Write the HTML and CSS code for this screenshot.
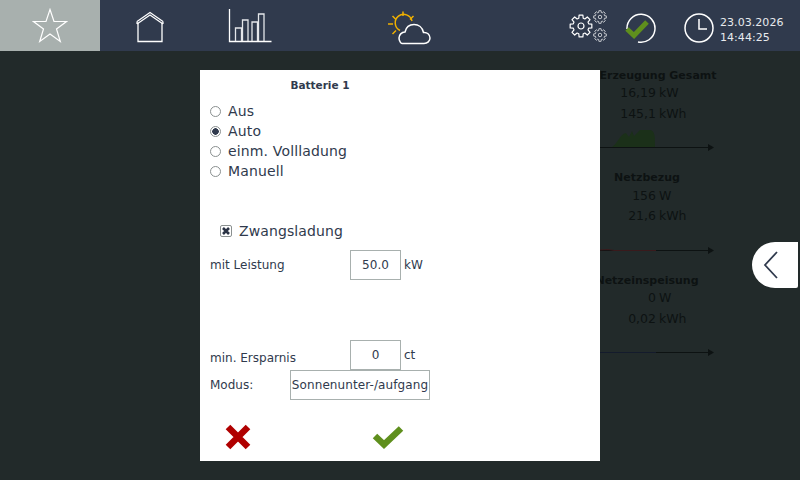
FILE: index.html
```html
<!DOCTYPE html>
<html lang="en">
<head>
    <meta charset="UTF-8">
    <meta name="viewport" content="width=device-width, initial-scale=1.0">
    <title>Batterie 1</title>
    <link rel="stylesheet" href="styles.css">
</head>
<body>
    <svg class="defs" width="0" height="0">
        <symbol id="gear" viewBox="-12 -12 24 24">
            <path d="M7.69-2.2 10.83-1.91V1.91L7.69 2.2 7 3.88 9.01 6.31 6.31 9.01 3.88 7 2.2 7.69 1.91 10.83H-1.91L-2.2 7.69-3.88 7-6.31 9.01-9.01 6.31-7 3.88-7.69 2.2-10.83 1.91V-1.91L-7.69-2.2-7-3.88-9.01-6.31-6.31-9.01-3.88-7-2.2-7.69-1.91-10.83H1.91L2.2-7.69 3.88-7 6.31-9.01 9.01-6.31 7-3.88Z" fill="none" stroke="#fff" stroke-width="1.200" stroke-linejoin="round"/>
            <circle r="3" fill="none" stroke="#fff" stroke-width="1.200"/>
        </symbol>
    </svg>

    <header class="topbar">
        <div class="nav-item active">
            <svg width="36" height="36" viewBox="0 0 36 36"><path d="M18 1.500 22 13.500H34.500L24.500 21 28.300 33.500 18 26 7.700 33.500 11.500 21 1.500 13.500H14Z" fill="none" stroke="#fff" stroke-width="1.200"/></svg>
        </div>
        <div class="nav-item">
            <svg width="32" height="36" viewBox="0 0 32 36"><path d="M4 14.500V33.500H28V14.500" fill="none" stroke="#fff" stroke-width="1.300"/><path d="M3 16 16 7 29 16M3 13.500 16 4.500 29 13.500M3 13.500V16M29 13.500V16" fill="none" stroke="#fff" stroke-width="1.200"/></svg>
        </div>
        <div class="nav-item">
            <svg width="44" height="36" viewBox="0 0 44 36"><path d="M1.500 1V33.500H43.500" fill="none" stroke="#fff" stroke-width="1.300"/><path d="M7.500 33V20H13.500V33M14.500 33V12H20V33M24 33V14H29.500V33M30.500 33V6H36V33" fill="none" stroke="#e4e6ea" stroke-width="1.300"/></svg>
        </div>
        <div class="weather">
            <svg width="44" height="36" viewBox="0 0 44 36">
                <g fill="none" stroke="#f0b000" stroke-width="1.500">
                    <path d="M12 21.500A8.500 8.500 0 1 1 24 12"/>
                    <path d="M15 2.500V7M4.500 7 8 10.500M25.500 7 22 10.500M0 15H5M4.500 25 8 21.500"/>
                </g>
                <path d="M14 34.500H36C39.500 34.500 42 32 42 29 42 25.500 39 23 35.500 23.500 34.500 18.500 30.500 15.500 26 15.500 21.500 15.500 18 18.500 17 23 13.500 23 11 26 11 29 11 32 13 34.500 14 34.500Z" fill="#303a4d" stroke="#fff" stroke-width="1.500"/>
            </svg>
        </div>
        <div class="gears">
            <svg class="gear-big" width="24" height="24"><use href="#gear"/></svg>
            <svg class="gear-small" width="14" height="14"><use href="#gear"/></svg>
            <svg class="gear-small" width="14" height="14"><use href="#gear"/></svg>
        </div>
        <svg class="status" width="32" height="32" viewBox="0 0 32 32">
            <path d="M3 17A14 14 0 1 1 14 30" fill="none" stroke="#fff" stroke-width="1.500"/>
            <path d="M3 17 10 23.500 23 10" fill="none" stroke="#5f8f1d" stroke-width="5"/>
        </svg>
        <svg class="clock" width="32" height="32" viewBox="0 0 32 32">
            <circle cx="16" cy="16" r="14" fill="none" stroke="#fff" stroke-width="1.500"/>
            <path d="M16 7V17H24" fill="none" stroke="#fff" stroke-width="1.500"/>
        </svg>
        <div class="datetime">23.03.2026<br>14:44:25</div>
    </header>

    <main class="content">
        <section class="stat">
            <div class="stat-title title-wide">Erzeugung Gesamt</div>
            <div class="stat-value"><span>16,19</span><span>kW</span></div>
            <div class="stat-value"><span>145,1</span><span>kWh</span></div>
            <svg class="chart" width="116" height="24" viewBox="0 0 116 24">
                <path d="M12 21C18 17 20 8 26 7L29 11 32 5 34 10 40 4H50C55 5 55 10 55 21Z" fill="#1b3019"/>
                <path d="M0 21.500H108" stroke="#0d1212" stroke-width="1.200"/>
                <path d="M108 18 114 21.500 108 25Z" fill="#0d1212"/>
            </svg>
        </section>
        <section class="stat">
            <div class="stat-title">Netzbezug</div>
            <div class="stat-value"><span>156</span><span>W</span></div>
            <div class="stat-value"><span>21,6</span><span>kWh</span></div>
            <svg class="chart" width="116" height="24" viewBox="0 0 116 24">
                <path d="M0 21.500H108" stroke="#0d1212" stroke-width="1.200"/>
                <path d="M0 21 8 20.500 14 21.500H56" fill="none" stroke="#3a1a1c" stroke-width="1.200"/>
                <path d="M108 18 114 21.500 108 25Z" fill="#0d1212"/>
            </svg>
        </section>
        <section class="stat">
            <div class="stat-title">Netzeinspeisung</div>
            <div class="stat-value"><span>0</span><span>W</span></div>
            <div class="stat-value"><span>0,02</span><span>kWh</span></div>
            <svg class="chart" width="116" height="24" viewBox="0 0 116 24">
                <path d="M0 21.500H108" stroke="#0d1212" stroke-width="1.200"/>
                <path d="M0 21.500H56" stroke="#141b2c" stroke-width="1.200"/>
                <path d="M108 18 114 21.500 108 25Z" fill="#0d1212"/>
            </svg>
        </section>
    </main>

    <div class="side-tab">
        <svg width="16" height="28" viewBox="0 0 16 28"><path d="M14 1 2 14 14 27" fill="none" stroke="#303a4d" stroke-width="1.800"/></svg>
    </div>

    <div class="modal">
        <h2 class="modal-title">Batterie 1</h2>
        <div class="radio-group">
            <label class="radio-row"><input type="radio" name="mode"> Aus</label>
            <label class="radio-row"><input type="radio" name="mode" checked> Auto</label>
            <label class="radio-row"><input type="radio" name="mode"> einm. Vollladung</label>
            <label class="radio-row"><input type="radio" name="mode"> Manuell</label>
        </div>
        <div class="check-row">
            <span class="checkbox">
                <svg width="8" height="8" viewBox="0 0 8 8"><path d="M1 1 7 7M7 1 1 7" stroke="#2b3345" stroke-width="2.600"/></svg>
            </span>
            Zwangsladung
        </div>
        <div class="field-row power-row">
            <span class="field-label">mit Leistung</span>
            <input class="field-input" type="text" value="50.0">
            <span class="field-unit">kW</span>
        </div>
        <div class="field-row savings-row">
            <span class="field-label label-low">min. Ersparnis</span>
            <input class="field-input" type="text" value="0">
            <span class="field-unit">ct</span>
        </div>
        <div class="field-row">
            <span class="field-label label-short">Modus:</span>
            <input class="field-input input-wide" type="text" value="Sonnenunter-/aufgang">
        </div>
        <div class="modal-actions">
            <svg width="26" height="26" viewBox="0 0 26 26"><path d="M3 3 23 23M23 3 3 23" stroke="#b00000" stroke-width="6.500"/></svg>
            <svg width="32" height="24" viewBox="0 0 32 24"><path d="M3 11 12 19.500 29 3.500" fill="none" stroke="#5f8f1d" stroke-width="6.500"/></svg>
        </div>
    </div>
</body>
</html>
```

FILE: styles.css
```css
html, body {
    margin: 0;
    padding: 0;
}
body {
    position: relative;
    width: 800px;
    height: 480px;
    overflow: hidden;
    background-color: #222a2a;
    font-family: "DejaVu Sans", sans-serif;
    color: #303a4d;
}
.defs {
    position: absolute;
}
.topbar {
    display: flex;
    align-items: center;
    height: 51px;
    background-color: #303a4d;
}
.nav-item {
    display: flex;
    justify-content: center;
    align-items: center;
    width: 100px;
    height: 51px;
}
.nav-item svg {
    margin-top: 1px;
}
.nav-item.active {
    background-color: #a8b0ae;
}
.weather {
    display: flex;
    margin-left: 88px;
    margin-top: 2px;
}
.gears {
    display: grid;
    grid-template-columns: 24px 14px;
    grid-template-rows: 18px 18px;
    align-items: center;
    justify-items: center;
    margin-left: 137px;
    width: 38px;
}
.gear-big {
    grid-row: 1 / 3;
}
.status {
    margin-left: 17px;
    margin-top: 5px;
}
.clock {
    margin-left: 27px;
    margin-top: 5px;
}
.datetime {
    margin-left: 5px;
    margin-top: 8px;
    font-size: 11px;
    line-height: 15px;
    letter-spacing: 0.05px;
    color: #e8eaee;
}
.content {
    width: 200px;
    margin-left: 600px;
    padding-top: 17.500px;
    color: #0d1212;
}
.stat {
    height: 102.500px;
    font-size: 12.500px;
}
.stat-title {
    display: flex;
    justify-content: center;
    width: 94px;
    font-size: 11px;
    font-weight: bold;
    line-height: 13px;
    white-space: nowrap;
}
.title-wide {
    width: 116px;
}
.stat-value {
    display: grid;
    grid-template-columns: 56px auto;
    column-gap: 3px;
    margin-top: 2.500px;
    line-height: 18px;
}
.stat-value span:first-child {
    text-align: right;
}
.chart {
    display: block;
    margin-top: 3.500px;
    overflow: visible;
}
.side-tab {
    position: absolute;
    left: 752px;
    top: 242px;
    width: 46px;
    height: 46px;
    display: flex;
    align-items: center;
    padding-left: 11px;
    box-sizing: border-box;
    background-color: #fff;
    border-radius: 23px 0 2px 23px;
}
.modal {
    position: absolute;
    left: 200px;
    top: 70px;
    width: 400px;
    height: 391px;
    padding: 0 10px;
    box-sizing: border-box;
    background-color: #fff;
}
.modal-title {
    margin: 0;
    width: 220px;
    height: 31px;
    font-size: 10.500px;
    font-weight: bold;
    line-height: 31px;
    text-align: center;
}
.radio-row {
    display: flex;
    align-items: center;
    gap: 7px;
    height: 20px;
    font-size: 14px;
    letter-spacing: 0.15px;
}
.radio-row input {
    appearance: none;
    width: 11px;
    height: 11px;
    margin: 0;
    box-sizing: border-box;
    border: 1px solid #8a9090;
    border-radius: 50%;
    background-color: #fff;
}
.radio-row input:checked {
    background: radial-gradient(circle, #303a4d 3px, #fff 3.500px);
}
.check-row {
    display: flex;
    align-items: center;
    gap: 7px;
    height: 20px;
    margin-top: 40px;
    margin-left: 10px;
    font-size: 14px;
    letter-spacing: 0.1px;
}
.checkbox {
    display: flex;
    justify-content: center;
    align-items: center;
    width: 12px;
    height: 12px;
    box-sizing: border-box;
    border: 1px solid #8a9090;
    border-radius: 2px;
}
.field-row {
    display: flex;
    align-items: center;
    font-size: 12px;
}
.power-row {
    margin-top: 9px;
}
.savings-row {
    margin-top: 60px;
}
.field-label {
    width: 140px;
    font-size: 12px;
}
.label-low {
    margin-top: 6px;
}
.label-short {
    width: 80px;
}
.field-input {
    width: 51px;
    height: 30px;
    padding: 0;
    box-sizing: border-box;
    border: 1px solid #a8b0ae;
    border-radius: 0;
    background-color: #fff;
    font-family: "DejaVu Sans", sans-serif;
    font-size: 12px;
    letter-spacing: 0.1px;
    color: #303a4d;
    text-align: center;
    outline: none;
}
.input-wide {
    width: 140px;
}
.field-unit {
    margin-left: 3px;
    font-size: 12px;
}
.modal-actions {
    display: flex;
    align-items: center;
    gap: 121px;
    margin-top: 24px;
    margin-left: 15px;
}
```
